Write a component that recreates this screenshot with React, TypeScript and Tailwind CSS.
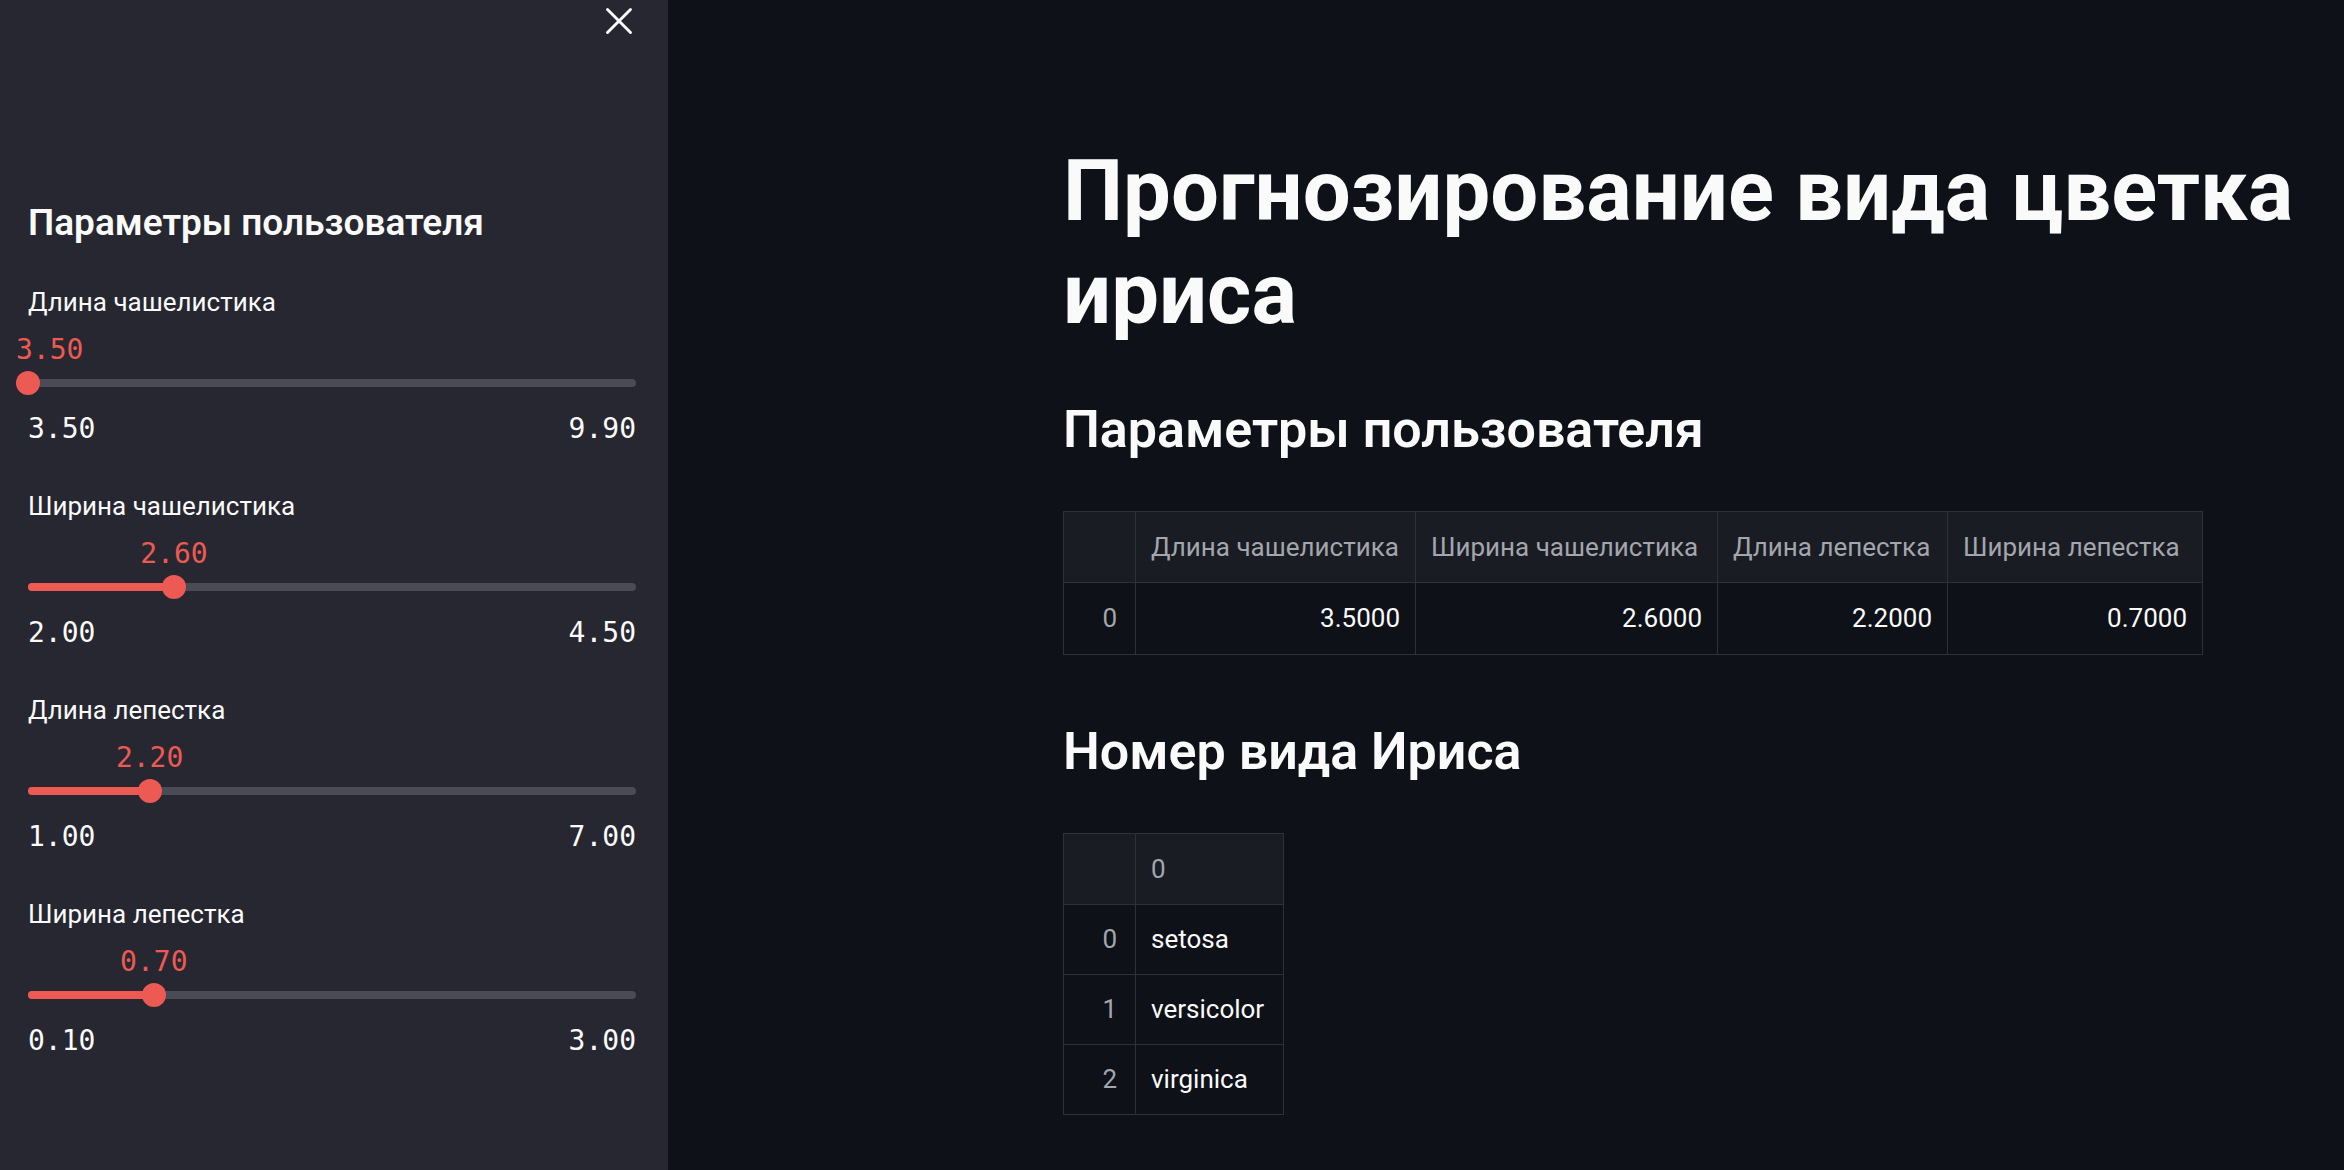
import { X } from "lucide-react";

const sliders = [
  { label: "Длина чашелистика", min: 3.5, max: 9.9, value: 3.5 },
  { label: "Ширина чашелистика", min: 2.0, max: 4.5, value: 2.6 },
  { label: "Длина лепестка", min: 1.0, max: 7.0, value: 2.2 },
  { label: "Ширина лепестка", min: 0.1, max: 3.0, value: 0.7 },
];

const columns = [
  { name: "Длина чашелистика", value: "3.5000", w: "w-[280px]" },
  { name: "Ширина чашелистика", value: "2.6000", w: "w-[302px]" },
  { name: "Длина лепестка", value: "2.2000", w: "w-[230px]" },
  { name: "Ширина лепестка", value: "0.7000", w: "w-[255px]" },
];

const species = ["setosa", "versicolor", "virginica"];

function Slider({ label, min, max, value }: { label: string; min: number; max: number; value: number }) {
  const pct = ((value - min) / (max - min)) * 100;
  return (
    <div className="mb-[43px]">
      <div className="text-[26px] leading-[36px] text-[#fafafa]">{label}</div>
      <div className="relative mt-[14px] h-[32px]">
        <span
          className="absolute top-0 font-['DejaVu_Sans_Mono',monospace] text-[28px] leading-[32px] text-[#ed5a54] whitespace-nowrap"
          style={{ left: `${pct}%`, transform: pct < 5 ? "translateX(-12px)" : "translateX(-50%)" }}
        >
          {value.toFixed(2)}
        </span>
      </div>
      <div className="relative mt-[5px] h-[24px]">
        <div className="absolute left-0 right-0 top-[8px] h-[8px] rounded-full bg-[#4a4b55]" />
        <div className="absolute left-0 top-[8px] h-[8px] rounded-full bg-[#ed5a54]" style={{ width: `${pct}%` }} />
        <div
          className="absolute top-0 h-[24px] w-[24px] rounded-full bg-[#ed5a54]"
          style={{ left: `calc(${pct}% - 12px)` }}
        />
      </div>
      <div className="mt-[18px] flex justify-between font-['DejaVu_Sans_Mono',monospace] text-[28px] leading-[32px] text-[#fafafa]">
        <span>{min.toFixed(2)}</span>
        <span>{max.toFixed(2)}</span>
      </div>
    </div>
  );
}

export default function App() {
  return (
    <div className="flex h-[1170px] w-full overflow-hidden bg-[#0e1117] font-['Roboto','Noto_Sans',sans-serif] text-[#fafafa]">
      <aside className="w-[668px] shrink-0 bg-[#262730] pl-[28px] pr-[32px]">
        <div className="flex justify-end pt-[9px] pr-[5px]">
          <X size={46} strokeWidth={1.5} className="-m-[11px] text-[#fafafa]" />
        </div>
        <h2 className="mt-[166px] text-[37px] font-semibold leading-[48px]">Параметры пользователя</h2>
        <div className="mt-[37px]">
          {sliders.map((s) => (
            <Slider key={s.label} {...s} />
          ))}
        </div>
      </aside>

      <main className="flex-1 pl-[395px] pt-[140px]">
        <div className="w-[1300px]">
          <h1 className="text-[85px] font-bold leading-[103px]">Прогнозирование вида цветка ириса</h1>

          <h3 className="mt-[50px] text-[52px] font-semibold leading-[68px]">Параметры пользователя</h3>

          <table className="mt-[47px] border-collapse text-[26px]">
            <thead>
              <tr className="bg-[#1a1c23]">
                <th className="h-[71px] w-[72px] border border-[#2f3138]" />
                {columns.map((c) => (
                  <th
                    key={c.name}
                    className={`${c.w} h-[71px] border border-[#2f3138] px-[15px] text-left font-normal text-[#a3a6ad] whitespace-nowrap`}
                  >
                    {c.name}
                  </th>
                ))}
              </tr>
            </thead>
            <tbody>
              <tr>
                <td className="h-[72px] border border-[#2f3138] pr-[18px] text-right text-[#a3a6ad]">0</td>
                {columns.map((c) => (
                  <td key={c.name} className="h-[72px] border border-[#2f3138] px-[15px] text-right">
                    {c.value}
                  </td>
                ))}
              </tr>
            </tbody>
          </table>

          <h3 className="mt-[63px] text-[52px] font-semibold leading-[68px]">Номер вида Ириса</h3>

          <table className="mt-[47px] border-collapse text-[26px]">
            <thead>
              <tr className="bg-[#1a1c23]">
                <th className="h-[71px] w-[72px] border border-[#2f3138]" />
                <th className="h-[71px] w-[148px] border border-[#2f3138] px-[15px] text-left font-normal text-[#a3a6ad]">
                  0
                </th>
              </tr>
            </thead>
            <tbody>
              {species.map((s, i) => (
                <tr key={s}>
                  <td className="h-[70px] border border-[#2f3138] pr-[18px] text-right text-[#a3a6ad]">{i}</td>
                  <td className="h-[70px] border border-[#2f3138] px-[15px] text-left">{s}</td>
                </tr>
              ))}
            </tbody>
          </table>
        </div>
      </main>
    </div>
  );
}
